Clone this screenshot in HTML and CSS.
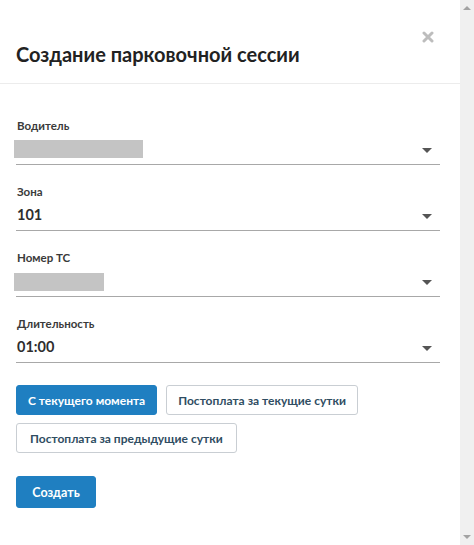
FILE: index.html
```html
<!DOCTYPE html>
<html lang="ru">
<head>
<meta charset="utf-8">
<link rel="stylesheet" href="styles.css">
</head>
<body>
<div class="window">
  <div class="modal">
    <div class="modal-header">
      <h1 class="modal-title">Создание парковочной сессии</h1>
      <button class="close" aria-label="Закрыть">
        <svg width="12" height="12" viewBox="0 0 12 12"><path d="M2 2 L10 10 M10 2 L2 10" stroke="#bdbdbd" stroke-width="3" stroke-linecap="round"/></svg>
      </button>
    </div>
    <div class="modal-body">
      <div class="field">
        <div class="label">Водитель</div>
        <div class="select"><span class="masked masked-wide"></span><span class="caret"></span></div>
      </div>
      <div class="field">
        <div class="label">Зона</div>
        <div class="select"><span class="value">101</span><span class="caret"></span></div>
      </div>
      <div class="field">
        <div class="label">Номер ТС</div>
        <div class="select"><span class="masked masked-narrow"></span><span class="caret"></span></div>
      </div>
      <div class="field">
        <div class="label">Длительность</div>
        <div class="select"><span class="value">01:00</span><span class="caret"></span></div>
      </div>
      <div class="options">
        <button class="btn btn-primary">С текущего момента</button>
        <button class="btn btn-outline">Постоплата за текущие сутки</button>
        <button class="btn btn-outline btn-wide">Постоплата за предыдущие сутки</button>
      </div>
      <button class="btn btn-primary btn-submit">Создать</button>
    </div>
  </div>
  <div class="scrollbar">
    <span class="arrow-up"></span>
    <span class="arrow-down"></span>
  </div>
</div>
</body>
</html>
```
FILE: styles.css
```css
* { box-sizing: border-box; }
html, body { margin: 0; padding: 0; background: #fff; }
body {
  font-family: Lato, "Open Sans", "Liberation Sans", sans-serif;
  color: #2b2b2b;
}
.window {
  display: flex;
  width: 474px;
  height: 545px;
  overflow: hidden;
}
.modal {
  flex: 1;
  min-width: 0;
}
.modal-header {
  display: flex;
  justify-content: space-between;
  align-items: flex-start;
  height: 84px;
  border-bottom: 1px solid #ececec;
  padding: 0 26px 0 16px;
}
.modal-title {
  margin: 40px 0 0 0;
  font-size: 20px;
  line-height: 28px;
  font-weight: 700;
  color: #222;
  letter-spacing: 0;
}
.close {
  margin-top: 31px;
  padding: 0;
  border: 0;
  background: none;
  width: 12px;
  height: 12px;
  display: flex;
}
.modal-body {
  padding: 35px 20px 0 16px;
}
.field {
  margin-bottom: 20px;
}
.label {
  font-size: 11.5px;
  line-height: 14px;
  font-weight: 700;
  color: #3a3a3a;
  margin-bottom: 2px;
  padding-left: 1px;
}
.select {
  display: flex;
  align-items: center;
  justify-content: space-between;
  height: 30px;
  padding: 0 8px 1px 0;
  border-bottom: 1px solid #a8a8a8;
}
.value {
  font-size: 14.5px;
  line-height: 20px;
  font-weight: 700;
  color: #2e2e2e;
  margin-top: -1px;
  padding-left: 1px;
}
.masked {
  display: block;
  height: 18px;
  background: #c4c4c4;
  margin-left: -2px;
}
.masked-wide { width: 129px; }
.masked-narrow { width: 90px; margin-top: 2px; }
.caret {
  width: 0;
  height: 0;
  border-left: 5px solid transparent;
  border-right: 5px solid transparent;
  border-top: 5px solid #555;
  margin-top: 2px;
}
.options {
  display: flex;
  flex-wrap: wrap;
  gap: 8px 9px;
  margin-top: 22px;
  margin-bottom: 23px;
}
.btn {
  font-family: Lato, "Open Sans", "Liberation Sans", sans-serif;
  font-size: 12px;
  font-weight: 700;
  height: 30px;
  padding: 0 11px;
  border-radius: 3px;
  cursor: pointer;
}
.btn-wide { padding: 0 13px; }
.btn-primary {
  background: #1f7fc1;
  border: 1px solid #1f7fc1;
  color: #fff;
}
.btn-outline {
  background: #fff;
  border: 1px solid #c9ced3;
  color: #2f4d62;
}
.btn-submit {
  height: 32px;
  width: 80px;
  padding: 0;
  font-size: 12.5px;
}
.scrollbar {
  width: 14px;
  flex: none;
  background: #f0f0f0;
  display: flex;
  flex-direction: column;
  justify-content: space-between;
  align-items: center;
  padding: 6px 0 6px;
}
.arrow-up, .arrow-down {
  width: 0;
  height: 0;
  border-left: 4px solid transparent;
  border-right: 4px solid transparent;
}
.arrow-up { border-bottom: 4px solid #a3a3a3; }
.arrow-down { border-top: 4px solid #a3a3a3; }
```
